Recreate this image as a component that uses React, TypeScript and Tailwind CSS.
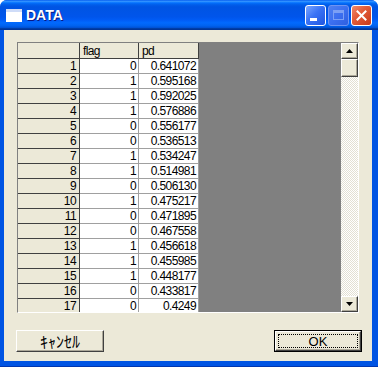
import React from 'react';

interface Row {
  flag: number;
  pd: string;
}

const rows: Row[] = [
  { flag: 0, pd: '0.641072' },
  { flag: 1, pd: '0.595168' },
  { flag: 1, pd: '0.592025' },
  { flag: 1, pd: '0.576886' },
  { flag: 0, pd: '0.556177' },
  { flag: 0, pd: '0.536513' },
  { flag: 1, pd: '0.534247' },
  { flag: 1, pd: '0.514981' },
  { flag: 0, pd: '0.506130' },
  { flag: 1, pd: '0.475217' },
  { flag: 0, pd: '0.471895' },
  { flag: 0, pd: '0.467558' },
  { flag: 1, pd: '0.456618' },
  { flag: 1, pd: '0.455985' },
  { flag: 1, pd: '0.448177' },
  { flag: 0, pd: '0.433817' },
  { flag: 0, pd: '0.4249' },
];

const bevel =
  'bg-[#ece9d8] border border-t-white border-l-white border-r-[#404040] border-b-[#404040] shadow-[inset_-1px_-1px_0_#aca899]';

const TitleButton: React.FC<{ kind: 'min' | 'max' | 'close' }> = ({ kind }) => {
  if (kind === 'close') {
    return (
      <div className="w-[21px] h-[21px] rounded-[3px] border border-white bg-[linear-gradient(135deg,#f08a6c_0%,#e35d3a_40%,#c8391a_100%)] flex items-center justify-center">
        <svg width="11" height="11" viewBox="0 0 11 11">
          <path d="M1.5 1.5 L9.5 9.5 M9.5 1.5 L1.5 9.5" stroke="white" strokeWidth="2" strokeLinecap="square" />
        </svg>
      </div>
    );
  }
  if (kind === 'max') {
    return (
      <div className="w-[21px] h-[21px] rounded-[3px] border border-[#6f94f2] bg-[linear-gradient(135deg,#4f80f0_0%,#3c6ff0_50%,#2f5fe0_100%)] flex items-center justify-center">
        <div className="w-[11px] h-[10px] border border-[#7b9ff5] border-t-[3px]" />
      </div>
    );
  }
  return (
    <div className="w-[21px] h-[21px] rounded-[3px] border border-white bg-[linear-gradient(135deg,#7aa6ff_0%,#3a73f5_45%,#1f55e0_100%)] flex items-end pl-[4px] pb-[4px]">
      <div className="w-[7px] h-[3px] bg-white" />
    </div>
  );
};

const cellText = 'text-[12px] tracking-[-0.6px] text-black leading-none';

const App: React.FC = () => {
  return (
    <div className="w-[378px] h-[367px] bg-white font-['Liberation_Sans',sans-serif]">
      <div className="w-[378px] h-[367px] rounded-t-[7px] bg-[#0054e3] border-b border-[#0036b0] flex flex-col overflow-hidden">
        {/* Title bar */}
        <div className="h-[30px] shrink-0 flex items-center pl-[6px] pr-[6px] bg-[linear-gradient(#0058ee_0%,#3593ff_4%,#288eff_6%,#127dff_8%,#036ffc_10%,#0262ee_14%,#0057e5_20%,#0054e3_24%,#0055eb_56%,#005bf5_66%,#026afe_76%,#0062ef_86%,#0052d6_92%,#0040ab_94%,#003092_100%)]">
          <div className="w-[16px] h-[13px] bg-white border-t-[3px] border-[#cfdcf8]" />
          <span className="ml-[4px] text-white font-bold text-[14px] [text-shadow:1px_1px_0_#0a1883]">DATA</span>
          <div className="ml-auto flex gap-[2px]">
            <TitleButton kind="min" />
            <TitleButton kind="max" />
            <TitleButton kind="close" />
          </div>
        </div>

        {/* Client area */}
        <div className="ml-[4px] mr-[6px] h-[331px] shrink-0 bg-[#ece9d8] flex flex-col">
          <div className="pt-[12px] pl-[13px]">
            <div className="w-[342px] h-[271px] border border-t-[#808080] border-l-[#808080] border-r-white border-b-white flex overflow-hidden">
              {/* Row headers */}
              <div className={`w-[62px] flex flex-col ${cellText}`}>
                <div className="h-[16px] shrink-0 border-r border-b border-[#404040] bg-[#ece9d8]" />
                {rows.map((_, i) => (
                  <div
                    key={i}
                    className="h-[15px] shrink-0 border-r border-b border-[#404040] bg-[#ece9d8] flex items-center justify-end pr-[3px]"
                  >
                    {i + 1}
                  </div>
                ))}
              </div>
              {/* flag */}
              <div className={`w-[59px] flex flex-col ${cellText}`}>
                <div className="h-[16px] shrink-0 border-r border-b border-[#404040] bg-[#ece9d8] flex items-center pl-[3px]">
                  flag
                </div>
                {rows.map((r, i) => (
                  <div
                    key={i}
                    className="h-[15px] shrink-0 border-r border-b border-[#a0a0a0] bg-white flex items-center justify-end pr-[2px]"
                  >
                    {r.flag}
                  </div>
                ))}
              </div>
              {/* pd */}
              <div className={`w-[60px] flex flex-col ${cellText}`}>
                <div className="h-[16px] shrink-0 border-r border-b border-[#404040] bg-[#ece9d8] flex items-center pl-[3px]">
                  pd
                </div>
                {rows.map((r, i) => (
                  <div
                    key={i}
                    className="h-[15px] shrink-0 border-r border-b border-[#a0a0a0] bg-white flex items-center justify-end pr-[2px]"
                  >
                    {r.pd}
                  </div>
                ))}
              </div>
              {/* empty area */}
              <div className="w-[142px] bg-[#808080]" />
              {/* scrollbar */}
              <div className="w-[17px] flex flex-col bg-[repeating-conic-gradient(#ffffff_0_25%,#e3e0d3_0_50%)] bg-[length:2px_2px]">
                <div className={`h-[16px] shrink-0 flex items-center justify-center ${bevel}`}>
                  <svg width="7" height="4" viewBox="0 0 7 4">
                    <path d="M3.5 0 L7 4 L0 4 Z" fill="black" />
                  </svg>
                </div>
                <div className={`h-[18px] shrink-0 ${bevel}`} />
                <div className="flex-1" />
                <div className={`h-[16px] shrink-0 flex items-center justify-center ${bevel}`}>
                  <svg width="7" height="4" viewBox="0 0 7 4">
                    <path d="M0 0 L7 0 L3.5 4 Z" fill="black" />
                  </svg>
                </div>
              </div>
            </div>
          </div>

          {/* Buttons */}
          <div className="mt-[17px] pl-[12px] pr-[10px] flex justify-between">
            <button
              className={`w-[88px] h-[22px] flex items-center justify-center text-[16px] text-black font-['Noto_Sans_CJK_JP',sans-serif] leading-none ${bevel}`}
            >
              ｷｬﾝｾﾙ
            </button>
            <button className="w-[88px] h-[22px] border border-black p-0">
              <div className={`w-full h-full flex items-center justify-center ${bevel} p-[2px]`}>
                <div className="w-full h-full border border-dotted border-black flex items-center justify-center text-[13px] text-black leading-none">
                  OK
                </div>
              </div>
            </button>
          </div>
        </div>
      </div>
    </div>
  );
};

export default App;
